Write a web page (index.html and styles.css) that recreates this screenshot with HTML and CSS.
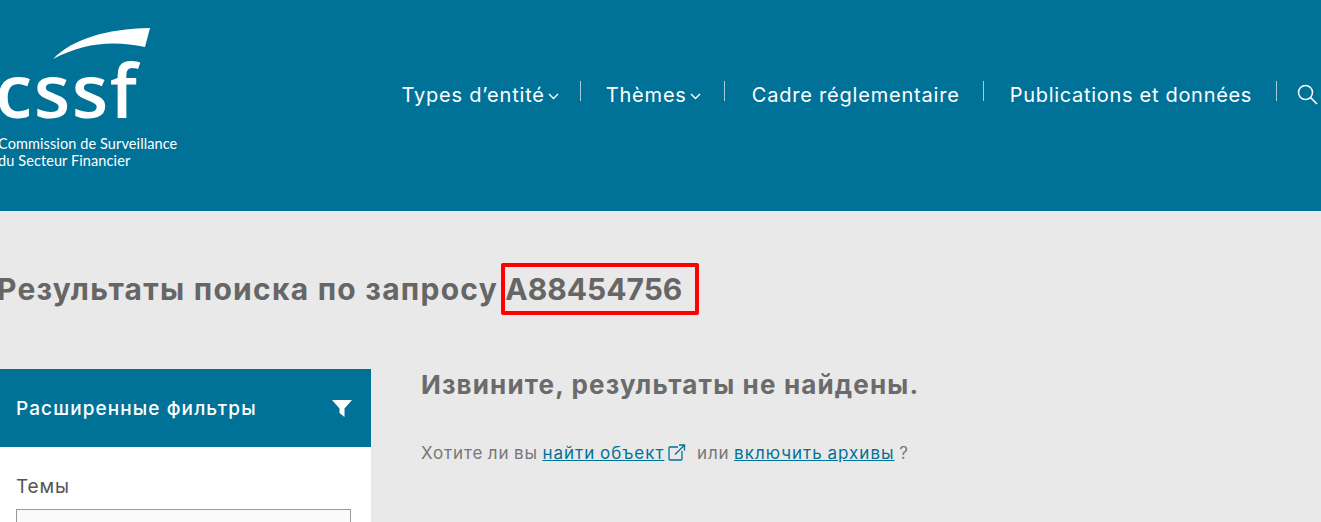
FILE: index.html
```html
<!DOCTYPE html>
<html lang="ru">
<head>
<meta charset="utf-8">
<title>CSSF</title>
<link rel="stylesheet" href="styles.css">
</head>
<body>
<header class="site-header">
  <a class="logo" href="#">
    <svg class="swoosh" viewBox="0 0 100 34" width="100" height="34"><path d="M0 33C20 13 52 3 97 2L92 21C60 14 30 17 0 33Z" fill="#fff"/></svg>
    <span class="logo-mark">cssf</span>
    <span class="logo-text">Commission de Surveillance</span>
    <span class="logo-text">du Secteur Financier</span>
  </a>
  <nav class="nav">
    <a class="nav-item" href="#">Types d’entité<svg class="chevron" viewBox="0 0 11 7" width="11" height="7"><path d="M1 1l4.5 4.5L10 1" fill="none" stroke="#fff" stroke-width="1.4"/></svg></a>
    <a class="nav-item" href="#">Thèmes<svg class="chevron" viewBox="0 0 11 7" width="11" height="7"><path d="M1 1l4.5 4.5L10 1" fill="none" stroke="#fff" stroke-width="1.4"/></svg></a>
    <a class="nav-item nav-item-plain" href="#">Cadre réglementaire</a>
    <a class="nav-item nav-item-long" href="#">Publications et données</a>
    <a class="nav-search" href="#"><svg viewBox="0 0 21 21" width="21" height="21"><circle cx="8.5" cy="8.5" r="7" fill="none" stroke="#fff" stroke-width="1.5"/><path d="M13.5 13.5l6.5 6.5" fill="none" stroke="#fff" stroke-width="1.7"/></svg></a>
  </nav>
</header>
<main class="page">
  <h1 class="title">Результаты поиска по запросу <span class="query">A88454756</span></h1>
  <div class="columns">
    <aside class="filters">
      <div class="filters-head">
        <span>Расширенные фильтры</span>
        <svg viewBox="0 0 20 17" width="20" height="17"><path d="M0 0H20L12.5 8.5V17L7.5 13V8.5Z" fill="#fff"/></svg>
      </div>
      <div class="filters-body">
        <div class="filter-label">Темы</div>
        <div class="filter-select"></div>
      </div>
    </aside>
    <section class="results">
      <h2 class="empty">Извините, результаты не найдены.</h2>
      <p class="hint">Хотите ли вы <a href="#">найти объект</a><svg class="ext" viewBox="0 0 18 17" width="18" height="17"><path d="M10 3H2a1 1 0 0 0-1 1v11a1 1 0 0 0 1 1h11a1 1 0 0 0 1-1V7" fill="none" stroke="#007298" stroke-width="1.3"/><path d="M7 10.500L16.500 1M11 1h5.500V6.500" fill="none" stroke="#007298" stroke-width="1.3"/></svg> или <a href="#">включить архивы</a> ?</p>
    </section>
  </div>
</main>
</body>
</html>
```
FILE: styles.css
```css
html, body {
  margin: 0;
  height: 522px;
  overflow: hidden;
}
body {
  background: #e9e9e9;
  font-family: Inter, "Noto Sans", sans-serif;
  color: #666;
}
a { color: inherit; text-decoration: none; }
.site-header {
  display: flex;
  align-items: flex-start;
  height: 211px;
  background: #007298;
  color: #fff;
}
.logo {
  display: flex;
  flex-direction: column;
  width: 190px;
  margin-left: -2px;
  padding-top: 26px;
  flex: none;
}
.swoosh { display: block; margin-left: 55px; flex: none; }
.logo-mark {
  font-family: "Open Sans", sans-serif;
  font-weight: 600;
  font-size: 75px;
  line-height: 58px;
  letter-spacing: 1.500px;
  margin-left: -3px;
  height: 75px;
}
.logo-text {
  font-family: Lato, sans-serif;
  font-size: 14.500px;
  line-height: 17px;
  letter-spacing: 0.100px;
}
.nav {
  display: flex;
  align-items: flex-start;
  margin: 81px 0 0 188.500px;
  height: 20px;
  flex: none;
}
.nav-item {
  display: flex;
  align-items: center;
  box-sizing: border-box;
  height: 20px;
  padding: 8px 25px 0;
  border-right: 1px solid #a9cbd8;
  font-size: 20px;
  letter-spacing: 0.800px;
  white-space: nowrap;
}
.nav-item:first-child { padding-right: 23px; }
.nav-item-plain { padding-left: 27px; padding-right: 23px; }
.nav-item-long { padding-left: 26px; padding-right: 24px; letter-spacing: 0.700px; }
.chevron { margin: 3px -2px 0 3px; }
.nav-search { padding: 3px 0 0 20px; display: block; }
.title {
  margin: 0;
  padding: 52px 0 0;
  margin-left: -3px;
  height: 106px;
  box-sizing: border-box;
  font-size: 30px;
  line-height: 52px;
  font-weight: 700;
  letter-spacing: 1.250px;
  white-space: nowrap;
}
.query {
  display: inline-block;
  border: 4px solid #f00;
  border-radius: 2px;
  margin-left: -5px;
  padding: 0 13px 0 0;
  line-height: 44px;
  letter-spacing: 0;
  vertical-align: top;
}
.columns {
  display: flex;
  margin-top: 52px;
}
.filters {
  width: 371px;
  flex: none;
  background: #fff;
}
.filters-head {
  display: flex;
  justify-content: space-between;
  align-items: center;
  height: 78px;
  padding: 0 19px 0 16px;
  background: #007298;
  color: #fff;
  font-size: 19px;
  font-weight: 500;
  letter-spacing: 1.100px;
}
.filters-body { padding: 27px 20px 0 16px; }
.filter-label {
  font-size: 19px;
  line-height: 26px;
  letter-spacing: 0.800px;
  color: #555;
  margin-bottom: 9px;
}
.filter-select {
  height: 40px;
  border: 1px solid #999;
  background: #fafafa;
}
.results { margin-left: 50px; }
.empty {
  margin: 0;
  font-size: 26px;
  line-height: 32px;
  font-weight: 700;
  letter-spacing: 1.150px;
  color: #6b6b6b;
}
.hint {
  margin: 38px 0 0;
  font-size: 17px;
  line-height: 28px;
  letter-spacing: 0.850px;
  word-spacing: -1px;
  color: #777;
}
.hint a {
  color: #007298;
  text-decoration: underline;
  letter-spacing: 1px;
}
.ext { margin: 0 6px 0 4px; vertical-align: -2px; }
```
